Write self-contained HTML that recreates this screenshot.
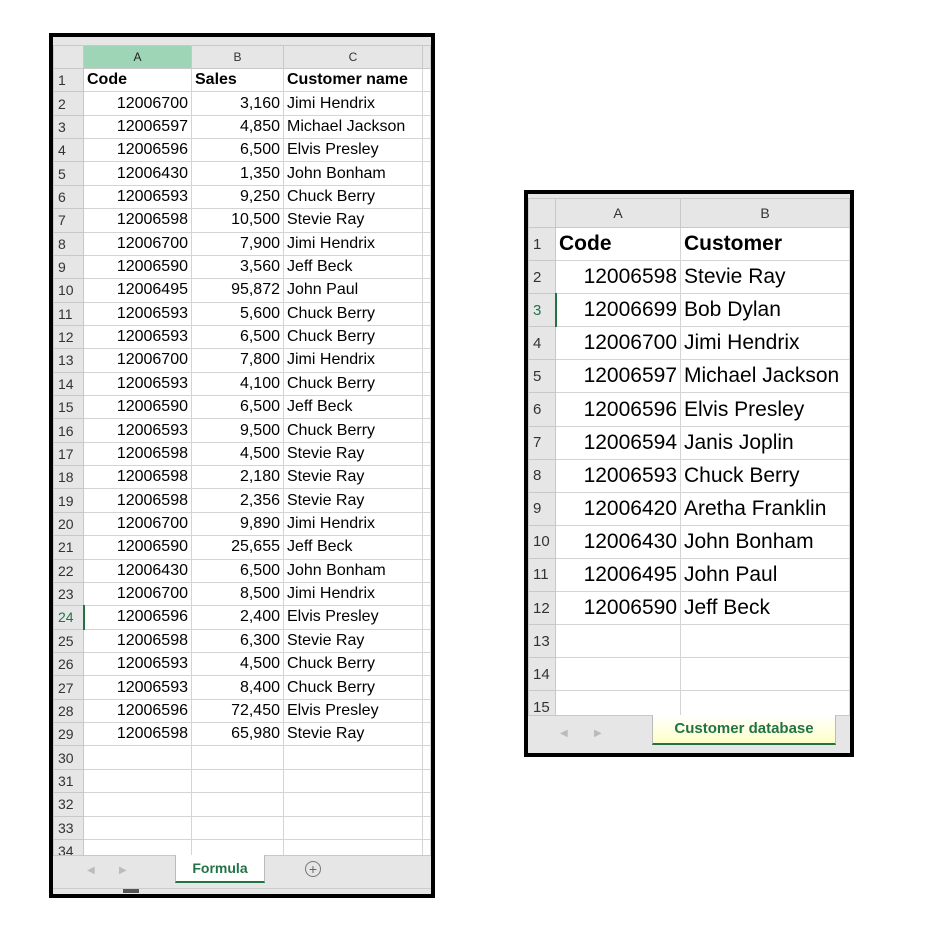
<!DOCTYPE html>
<html><head><meta charset="utf-8"><style>
body{margin:0;width:925px;height:925px;background:#fff;position:relative;overflow:hidden;font-family:"Liberation Sans",sans-serif;}
.p{position:absolute;border:4px solid #000;background:#e6e6e6;box-sizing:border-box;overflow:hidden}
table{border-collapse:collapse;table-layout:fixed;position:absolute;background:#fff}
td{border:1px solid #d4d4d4;padding:0 3px;white-space:nowrap;overflow:hidden;color:#000}
td.h{background:#e6e6e6;color:#333;text-align:left;border-color:#c8c8c8;padding-left:4px}
tr.ch td{background:#e6e6e6;text-align:center;color:#333;border-color:#c8c8c8}
td.r{text-align:right}
#L table{left:0;top:8px;font-size:16px}
#L tr{height:23.36px}
#L tr.ch{height:23px;font-size:12px}
#L td.h{font-size:14px}
#R table{left:0;top:4px;font-size:21px}
#R tr{height:33.1px}
#R tr.ch{height:29px;font-size:14px}
#R td.h{font-size:15px}
.tabbar{position:absolute;left:0;right:0;background:#e6e6e6;border-top:1px solid #c8c8c8}
.tab{position:absolute;background:#fff;color:#217346;font-weight:bold;text-align:center;border:1px solid #bbb;border-top:none;border-bottom:2px solid #217346;box-sizing:border-box}
.arr{position:absolute;color:#bbb;font-size:10px}
</style></head><body>

<div id="L" class="p" style="left:49px;top:33px;width:386px;height:865px;">
<table style="width:377px">
<colgroup><col style="width:30px"><col style="width:108px"><col style="width:92px"><col style="width:139px"><col style="width:8px"></colgroup>
<tr class="ch"><td style="background:#e6e6e6"></td><td style="background:#9fd5b7;color:#222">A</td><td>B</td><td>C</td><td></td></tr>
<tr><td class="h">1</td><td><b>Code</b></td><td><b>Sales</b></td><td><b>Customer name</b></td><td></td></tr>
<tr><td class="h">2</td><td class="r">12006700</td><td class="r">3,160</td><td>Jimi Hendrix</td><td></td></tr>
<tr><td class="h">3</td><td class="r">12006597</td><td class="r">4,850</td><td>Michael Jackson</td><td></td></tr>
<tr><td class="h">4</td><td class="r">12006596</td><td class="r">6,500</td><td>Elvis Presley</td><td></td></tr>
<tr><td class="h">5</td><td class="r">12006430</td><td class="r">1,350</td><td>John Bonham</td><td></td></tr>
<tr><td class="h">6</td><td class="r">12006593</td><td class="r">9,250</td><td>Chuck Berry</td><td></td></tr>
<tr><td class="h">7</td><td class="r">12006598</td><td class="r">10,500</td><td>Stevie Ray</td><td></td></tr>
<tr><td class="h">8</td><td class="r">12006700</td><td class="r">7,900</td><td>Jimi Hendrix</td><td></td></tr>
<tr><td class="h">9</td><td class="r">12006590</td><td class="r">3,560</td><td>Jeff Beck</td><td></td></tr>
<tr><td class="h">10</td><td class="r">12006495</td><td class="r">95,872</td><td>John Paul</td><td></td></tr>
<tr><td class="h">11</td><td class="r">12006593</td><td class="r">5,600</td><td>Chuck Berry</td><td></td></tr>
<tr><td class="h">12</td><td class="r">12006593</td><td class="r">6,500</td><td>Chuck Berry</td><td></td></tr>
<tr><td class="h">13</td><td class="r">12006700</td><td class="r">7,800</td><td>Jimi Hendrix</td><td></td></tr>
<tr><td class="h">14</td><td class="r">12006593</td><td class="r">4,100</td><td>Chuck Berry</td><td></td></tr>
<tr><td class="h">15</td><td class="r">12006590</td><td class="r">6,500</td><td>Jeff Beck</td><td></td></tr>
<tr><td class="h">16</td><td class="r">12006593</td><td class="r">9,500</td><td>Chuck Berry</td><td></td></tr>
<tr><td class="h">17</td><td class="r">12006598</td><td class="r">4,500</td><td>Stevie Ray</td><td></td></tr>
<tr><td class="h">18</td><td class="r">12006598</td><td class="r">2,180</td><td>Stevie Ray</td><td></td></tr>
<tr><td class="h">19</td><td class="r">12006598</td><td class="r">2,356</td><td>Stevie Ray</td><td></td></tr>
<tr><td class="h">20</td><td class="r">12006700</td><td class="r">9,890</td><td>Jimi Hendrix</td><td></td></tr>
<tr><td class="h">21</td><td class="r">12006590</td><td class="r">25,655</td><td>Jeff Beck</td><td></td></tr>
<tr><td class="h">22</td><td class="r">12006430</td><td class="r">6,500</td><td>John Bonham</td><td></td></tr>
<tr><td class="h">23</td><td class="r">12006700</td><td class="r">8,500</td><td>Jimi Hendrix</td><td></td></tr>
<tr><td class="h" style="color:#217346;border-right:2px solid #217346">24</td><td class="r">12006596</td><td class="r">2,400</td><td>Elvis Presley</td><td></td></tr>
<tr><td class="h">25</td><td class="r">12006598</td><td class="r">6,300</td><td>Stevie Ray</td><td></td></tr>
<tr><td class="h">26</td><td class="r">12006593</td><td class="r">4,500</td><td>Chuck Berry</td><td></td></tr>
<tr><td class="h">27</td><td class="r">12006593</td><td class="r">8,400</td><td>Chuck Berry</td><td></td></tr>
<tr><td class="h">28</td><td class="r">12006596</td><td class="r">72,450</td><td>Elvis Presley</td><td></td></tr>
<tr><td class="h">29</td><td class="r">12006598</td><td class="r">65,980</td><td>Stevie Ray</td><td></td></tr>
<tr><td class="h">30</td><td></td><td></td><td></td><td></td></tr>
<tr><td class="h">31</td><td></td><td></td><td></td><td></td></tr>
<tr><td class="h">32</td><td></td><td></td><td></td><td></td></tr>
<tr><td class="h">33</td><td></td><td></td><td></td><td></td></tr>
<tr><td class="h">34</td><td></td><td></td><td></td><td></td></tr>
</table>
<div class="tabbar" style="top:818px;height:45px;">
<span class="arr" style="left:34px;top:9px">◀</span><span class="arr" style="left:66px;top:9px">▶</span>
<div class="tab" style="left:122px;top:-1px;width:90px;height:28px;line-height:26px;font-size:14px;">Formula</div>
<div style="position:absolute;left:252px;top:5px;width:14px;height:14px;border:1.5px solid #777;border-radius:50%;color:#666;font-size:14px;line-height:14px;text-align:center">+</div>
<div style="position:absolute;left:0;right:0;top:32px;height:1px;background:#ccc"></div>
<div style="position:absolute;left:70px;top:33px;width:16px;height:4px;background:#555"></div>
</div>
</div>

<div id="R" class="p" style="left:524px;top:190px;width:330px;height:567px;">
<table style="width:321px">
<colgroup><col style="width:27px"><col style="width:125px"><col style="width:169px"></colgroup>
<tr class="ch"><td style="background:#e6e6e6"></td><td>A</td><td>B</td></tr>
<tr><td class="h">1</td><td><b>Code</b></td><td><b>Customer</b></td></tr>
<tr><td class="h">2</td><td class="r">12006598</td><td>Stevie Ray</td></tr>
<tr><td class="h" style="color:#217346;border-right:2px solid #217346">3</td><td class="r">12006699</td><td>Bob Dylan</td></tr>
<tr><td class="h">4</td><td class="r">12006700</td><td>Jimi Hendrix</td></tr>
<tr><td class="h">5</td><td class="r">12006597</td><td>Michael Jackson</td></tr>
<tr><td class="h">6</td><td class="r">12006596</td><td>Elvis Presley</td></tr>
<tr><td class="h">7</td><td class="r">12006594</td><td>Janis Joplin</td></tr>
<tr><td class="h">8</td><td class="r">12006593</td><td>Chuck Berry</td></tr>
<tr><td class="h">9</td><td class="r">12006420</td><td>Aretha Franklin</td></tr>
<tr><td class="h">10</td><td class="r">12006430</td><td>John Bonham</td></tr>
<tr><td class="h">11</td><td class="r">12006495</td><td>John Paul</td></tr>
<tr><td class="h">12</td><td class="r">12006590</td><td>Jeff Beck</td></tr>
<tr><td class="h">13</td><td></td><td></td></tr>
<tr><td class="h">14</td><td></td><td></td></tr>
<tr><td class="h">15</td><td></td><td></td></tr>
<tr><td class="h">16</td><td></td><td></td></tr>
</table>
<div class="tabbar" style="top:521px;height:42px;">
<span class="arr" style="left:32px;top:12px">◀</span><span class="arr" style="left:66px;top:12px">▶</span>
<div class="tab" style="left:124px;top:-1px;width:184px;height:30px;line-height:28px;font-size:15px;background:linear-gradient(#fff,#ffffc8);">Customer database</div>
</div>
</div>

</body></html>
